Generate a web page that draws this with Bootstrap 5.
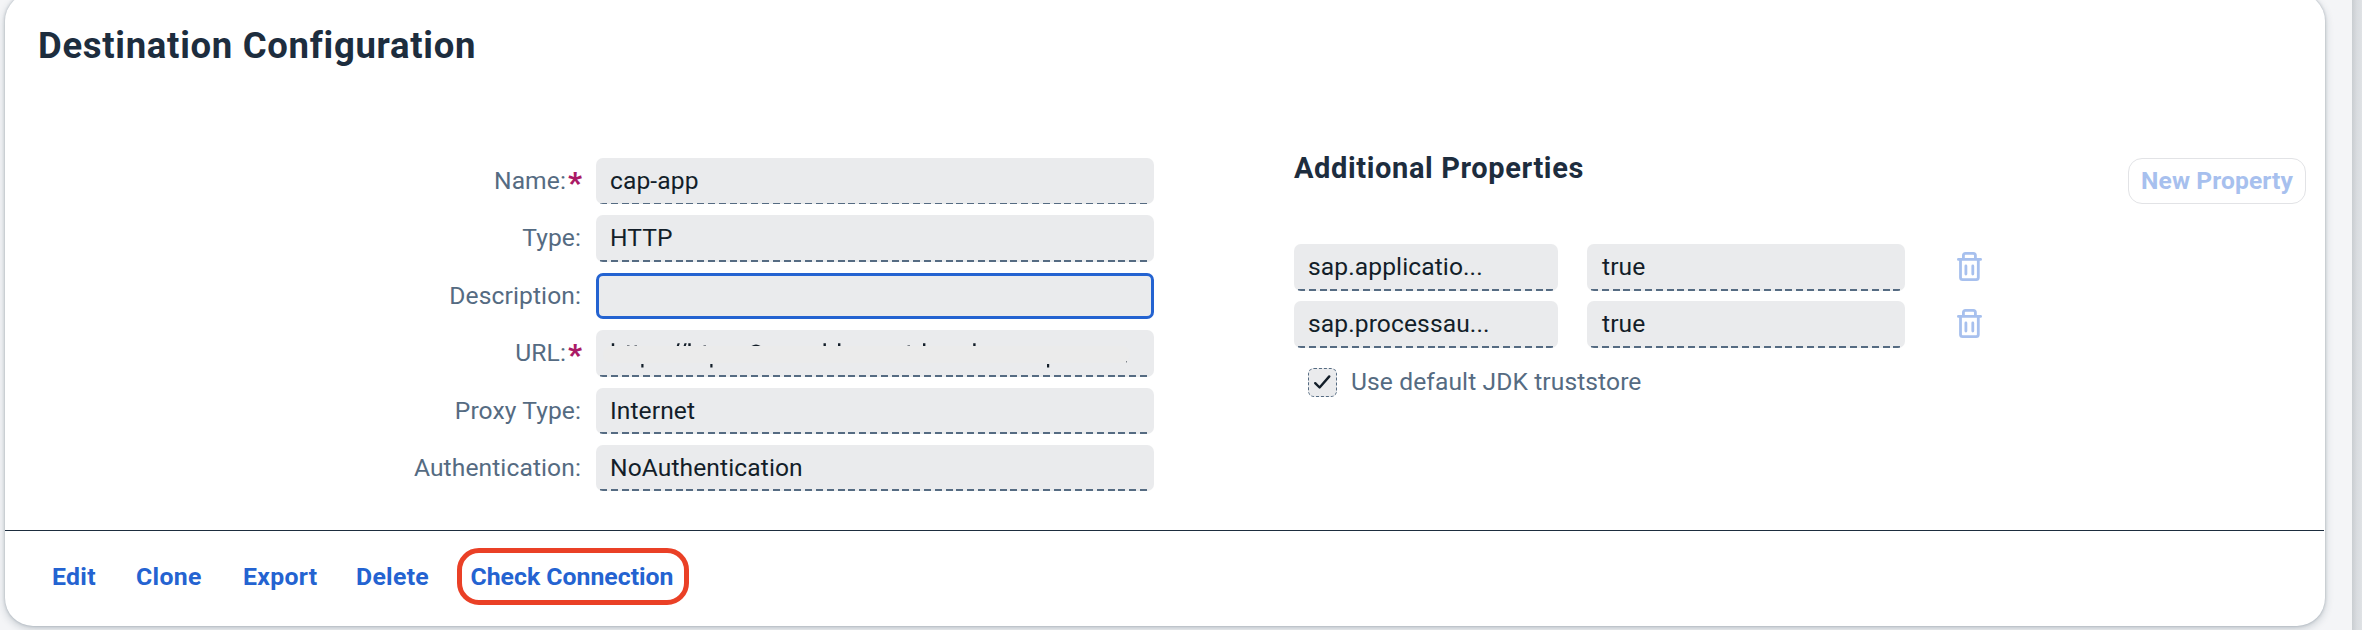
<!DOCTYPE html>
<html lang="en">
<head>
<meta charset="utf-8">
<meta name="viewport" content="width=device-width, initial-scale=1">
<title>Destination Configuration</title>
<link href="https://cdn.jsdelivr.net/npm/bootstrap@5.3.0/dist/css/bootstrap.min.css" rel="stylesheet">
<style>
html,body{height:630px;overflow:hidden}
body{background:#f4f5f7;font-family:Roboto,"Liberation Sans",sans-serif;font-size:24.6px;letter-spacing:.1px;color:#131e29}
.panel{width:2320px;height:633px;margin:-7px 0 0 5px;background:#fff;border-radius:28px;box-shadow:0 0 3px rgba(34,53,72,.3),0 3px 8px rgba(34,53,72,.22)}
.edge-strip{width:10px;height:630px;background:linear-gradient(90deg,#c9cdd1,#d9dce0 50%,#dfe2e5)}
.panel-title{font-size:36.5px;line-height:42px;letter-spacing:.7px;color:#1d2d3e;margin:32px 0 0 33px}
.panel-body{height:469px}
.form-side{width:1149px;padding-top:91px}
.form-line{height:46.4px;margin-bottom:11px;line-height:46.8px}
.form-label-cell{width:576px;margin-right:15px;color:#556b82;white-space:nowrap}
.req{color:#aa1a66;font-weight:900;font-size:30px;line-height:40px;width:13px;margin-left:2px;padding-top:5px;letter-spacing:0}
.ro-field{height:46.4px;line-height:46.8px;padding-left:14px;border-radius:7px;background:repeating-linear-gradient(90deg,#556b82 0 7px,#eaecee 7px 10.8px) 4px 100%/calc(100% - 7px) 2px no-repeat,#eaebed;white-space:nowrap;overflow:hidden}
.ro-field.thin{background-size:calc(100% - 7px) 1px,auto}
.ro-field.focused{background:#eaebed;border:3px solid #2463d1}
.prop-side{width:1036px;margin-left:140px;padding-top:77px}
.prop-head{height:100px}
.prop-title{font-size:29px;line-height:42px;letter-spacing:.62px;color:#1d2d3e;padding-top:3px}
.btn-newprop{width:178px;height:46px;margin:14px 19px 0 0;border:1px solid #e2e3e6;border-radius:14px;font-size:24.6px;line-height:44px;letter-spacing:.1px;color:#a7c0ee;padding:0}
.prop-line{height:46.6px;margin-bottom:10.8px}
.key-field{width:264px;height:46.6px}
.val-field{width:318px;height:46.6px;margin:0 52px 0 29px;padding-left:15px}
.bin-icon{margin-bottom:2px}
.tick-box{width:29px;height:29px;border:1px dashed #556b82;border-radius:6px;background:#eaebed;margin:0 14px 0 14px}
.trust-label{color:#556b82}
.panel-foot{height:97px;margin-right:1px;border-top:1px solid #1d2d3e}
.foot-row{padding:17px 0 0 47px}
.foot-link{color:#2463d1;text-decoration:none;font-size:24.8px;letter-spacing:.3px;line-height:47px}
.ringed{width:232px;height:57px;border:5px solid #ea4026;border-radius:22px;letter-spacing:0;padding-right:2px}
</style>
</head>
<body>
<div class="d-flex justify-content-between">
<main class="panel flex-shrink-0 d-flex flex-column">
  <h1 class="panel-title fw-bold">Destination Configuration</h1>
  <div class="panel-body d-flex">
    <section class="form-side">
      <div class="form-line d-flex"><div class="form-label-cell d-flex justify-content-end"><span>Name:</span><span class="req">*</span></div><div class="ro-field thin flex-grow-1">cap-app</div></div>
      <div class="form-line d-flex"><div class="form-label-cell text-end">Type:</div><div class="ro-field flex-grow-1">HTTP</div></div>
      <div class="form-line d-flex"><div class="form-label-cell text-end">Description:</div><div class="ro-field focused flex-grow-1"></div></div>
      <div class="form-line d-flex"><div class="form-label-cell d-flex justify-content-end"><span>URL:</span><span class="req">*</span></div><div class="ro-field flex-grow-1 p-0">
        <!-- masked address: only the tips of the letters stay visible -->
        <svg class="d-block" width="558" height="44" viewBox="0 0 558 44" fill="#131e29">
          <rect x="7" y="16" width="527" height="17" rx="8" fill="#ebebeb"/>
          <path d="M15.8 13.3h2.4v2.7h-2.4zM81.6 13.3h2.2l-.9 2.7h-2.2zM88.5 13.3h2.2l-.9 2.7h-2.2zM92.3 13.3h2.4v2.7h-2.4zM155.5 16q4.5-3.2 9 0zM227.5 13.3h2.4v2.7h-2.4zM242 13.3h2.4v2.7H242zM327 13.3h2.4v2.7H327zM377.2 13.3h2.4v2.7h-2.4zM45.3 34h2.2v3.4h-2.2zM114.3 34h2.2v3.4h-2.2zM451 34h2.2v3.4H451z"/>
          <path opacity=".5" d="M31 15h2.5v1H31zM38.5 15H41v1h-2.5zM107.5 15h2.5v1h-2.5zM311.5 15h2.5v1h-2.5zM530 31h1v1.5h-1z"/>
        </svg></div></div>
      <div class="form-line d-flex"><div class="form-label-cell text-end">Proxy Type:</div><div class="ro-field flex-grow-1">Internet</div></div>
      <div class="form-line d-flex"><div class="form-label-cell text-end">Authentication:</div><div class="ro-field flex-grow-1">NoAuthentication</div></div>
    </section>
    <section class="prop-side">
      <div class="prop-head d-flex justify-content-between align-items-start">
        <h2 class="prop-title fw-bold m-0">Additional Properties</h2>
        <button class="btn btn-newprop fw-bold" type="button">New Property</button>
      </div>
      <div class="prop-line d-flex align-items-center">
        <div class="ro-field key-field">sap.applicatio...</div><div class="ro-field val-field">true</div>
        <svg class="bin-icon" width="25" height="29" viewBox="0 0 25 29" fill="none" stroke="#a7c0ee" stroke-width="2.8" stroke-linecap="round" stroke-linejoin="round"><path d="M1.4 7.4h22.2M6.4 7V3.5q0-2.1 2.1-2.1h7.8q2.1 0 2.1 2.1V7M3.5 8v17.5q0 2.1 2.1 2.1h13.6q2.1 0 2.1-2.1V8M8.9 14v8M15.8 14v8"/></svg>
      </div>
      <div class="prop-line d-flex align-items-center">
        <div class="ro-field key-field">sap.processau...</div><div class="ro-field val-field">true</div>
        <svg class="bin-icon" width="25" height="29" viewBox="0 0 25 29" fill="none" stroke="#a7c0ee" stroke-width="2.8" stroke-linecap="round" stroke-linejoin="round"><path d="M1.4 7.4h22.2M6.4 7V3.5q0-2.1 2.1-2.1h7.8q2.1 0 2.1 2.1V7M3.5 8v17.5q0 2.1 2.1 2.1h13.6q2.1 0 2.1-2.1V8M8.9 14v8M15.8 14v8"/></svg>
      </div>
      <div class="prop-line d-flex align-items-center">
        <div class="tick-box d-flex align-items-center justify-content-center"><svg width="19" height="16" viewBox="0 0 19 16" fill="none" stroke="#131e29" stroke-width="2.4" stroke-linecap="round" stroke-linejoin="round"><path d="M2.2 9.2l4.4 4.3L16.3 2.4"/></svg></div>
        <span class="trust-label">Use default JDK truststore</span>
      </div>
    </section>
  </div>
  <nav class="panel-foot d-flex align-items-start">
    <div class="foot-row d-flex align-items-center">
      <a class="foot-link fw-bold" href="#" style="width:84px">Edit</a>
      <a class="foot-link fw-bold" href="#" style="width:107px">Clone</a>
      <a class="foot-link fw-bold" href="#" style="width:113px">Export</a>
      <a class="foot-link fw-bold" href="#" style="width:101px">Delete</a>
      <a class="foot-link fw-bold ringed text-center" href="#">Check Connection</a>
    </div>
  </nav>
</main>
<div class="edge-strip flex-shrink-0"></div>
</div>
<script src="https://cdn.jsdelivr.net/npm/bootstrap@5.3.0/dist/js/bootstrap.bundle.min.js"></script>
</body>
</html>
